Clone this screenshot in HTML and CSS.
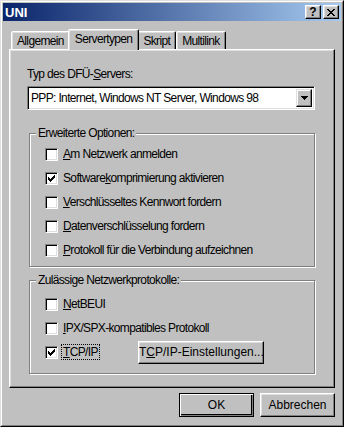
FILE: index.html
```html
<!DOCTYPE html>
<html lang="de">
<head>
    <meta charset="UTF-8">
    <title>UNI</title>
    <link rel="stylesheet" href="styles.css">
</head>
<body>
    <div class="window">
      <div class="frame">
        <!-- Title bar -->
        <div class="titlebar">
            <span class="title">UNI</span>
            <span class="cap-btn help">?</span>
            <span class="cap-btn close">
                <svg width="8" height="7" viewBox="0 0 8 7" shape-rendering="crispEdges">
                    <path d="M0 0h2v1h-2z M6 0h2v1h-2z M1 1h2v1h-2z M5 1h2v1h-2z M2 2h4v1h-4z M3 3h2v1h-2z M2 4h4v1h-4z M1 5h2v1h-2z M5 5h2v1h-2z M0 6h2v1h-2z M6 6h2v1h-2z" fill="#000"/>
                </svg>
            </span>
        </div>

        <div class="dialog">
            <div class="tabs">
                <div class="tab">Allgemein</div>
                <div class="tab active">Servertypen</div>
                <div class="tab">Skript</div>
                <div class="tab">Multilink</div>
            </div>

            <div class="panel">
                <div class="field-label">Typ des DFÜ-<u>S</u>ervers:</div>
                <div class="combo">
                    <span class="combo-text">PPP: Internet, Windows NT Server, Windows 98</span>
                    <span class="combo-btn">
                        <svg width="7" height="4" viewBox="0 0 7 4" shape-rendering="crispEdges">
                            <path d="M0 0h7v1h-7z M1 1h5v1h-5z M2 2h3v1h-3z M3 3h1v1h-1z" fill="#000"/>
                        </svg>
                    </span>
                </div>

                <!-- Erweiterte Optionen -->
                <div class="group">
                    <div class="group-title">Erweiterte Optionen:</div>
                    <div class="group-body">
                        <div class="row"><span class="box"></span><span class="text"><u>A</u>m Netzwerk anmelden</span></div>
                        <div class="row"><span class="box checked"></span><span class="text">Software<u>k</u>omprimierung aktivieren</span></div>
                        <div class="row"><span class="box"></span><span class="text"><u>V</u>erschlüsseltes Kennwort fordern</span></div>
                        <div class="row"><span class="box"></span><span class="text"><u>D</u>atenverschlüsselung fordern</span></div>
                        <div class="row"><span class="box"></span><span class="text"><u>P</u>rotokoll für die Verbindung aufzeichnen</span></div>
                    </div>
                </div>

                <!-- Netzwerkprotokolle -->
                <div class="group group-proto">
                    <div class="group-title">Zulässige Netzwerkprotokolle:</div>
                    <div class="group-body proto-body">
                        <div class="row"><span class="box"></span><span class="text"><u>N</u>etBEUI</span></div>
                        <div class="row"><span class="box"></span><span class="text"><u>I</u>PX/SPX-kompatibles Protokoll</span></div>
                        <div class="row">
                            <span class="check-wide">
                                <span class="box checked"></span><span class="text focus"><u>T</u>CP/IP</span>
                            </span>
                            <button class="btn">T<u>C</u>P/IP-Einstellungen...</button>
                        </div>
                    </div>
                </div>
            </div>

            <div class="buttons">
                <button class="btn btn-default">OK</button>
                <button class="btn">Abbrechen</button>
            </div>
        </div>
      </div>
    </div>
</body>
</html>
```

FILE: styles.css
```css
body {
    margin: 0;
    font-family: "Liberation Sans", Arial, sans-serif;
    font-size: 12px;
    letter-spacing: -0.65px;
    color: #000;
}

u {
    text-decoration: underline;
    text-underline-offset: 1px;
}

.window {
    width: 344px;
    height: 427px;
    box-sizing: border-box;
    background: #c0c0c0;
    border: 1px solid;
    border-color: #dfdfdf #000 #000 #dfdfdf;
}

.frame {
    height: 100%;
    box-sizing: border-box;
    border: 1px solid;
    border-color: #fff #808080 #808080 #fff;
    padding: 1px;
    display: flex;
    flex-direction: column;
}

/* title bar */
.titlebar {
    height: 18px;
    flex: 0 0 18px;
    display: flex;
    align-items: center;
    padding: 0 2px;
    background: linear-gradient(90deg, #0a246a, #a6caf0);
}

.title {
    flex: 1;
    color: #fff;
    font-weight: bold;
    font-size: 13px;
    letter-spacing: 0;
}

.cap-btn {
    width: 16px;
    height: 14px;
    box-sizing: border-box;
    display: flex;
    align-items: center;
    justify-content: center;
    background: #c0c0c0;
    border: 1px solid;
    border-color: #fff #000 #000 #fff;
    box-shadow: inset -1px -1px #808080, inset 1px 1px #dfdfdf;
}

.help {
    margin-right: 2px;
    font-weight: bold;
    font-size: 12px;
    line-height: 12px;
    letter-spacing: 0;
}

/* dialog body */
.dialog {
    flex: 1;
    display: flex;
    flex-direction: column;
    padding: 8px 6px 7px;
}

.tabs {
    display: flex;
    align-items: flex-end;
    height: 20px;
    padding-left: 2px;
}

.tab {
    height: 18px;
    box-sizing: border-box;
    padding: 2px 5px 0;
    line-height: 15px;
    border: 1px solid;
    border-bottom: none;
    border-color: #fff #000 transparent #fff;
    border-radius: 2px 2px 0 0;
    box-shadow: inset -1px 0 #808080, inset 1px 1px #dfdfdf;
    background: #c0c0c0;
}

.tab.active {
    position: relative;
    z-index: 1;
    height: 21px;
    margin: 0 -2px -1px;
    padding: 2px 6px 0;
}

.panel {
    height: 339px;
    box-sizing: border-box;
    padding: 17px 19px 0 17px;
    border: 1px solid;
    border-color: #fff #000 #000 #fff;
    box-shadow: inset -1px -1px #808080, inset 1px 1px #dfdfdf;
}

.field-label {
    line-height: 14px;
}

.combo {
    margin-top: 5px;
    height: 24px;
    box-sizing: border-box;
    display: flex;
    align-items: center;
    background: #fff;
    border: 1px solid;
    border-color: #808080 #fff #fff #808080;
    box-shadow: inset 1px 1px #000, inset -1px -1px #dfdfdf;
    padding: 2px;
}

.combo-text {
    flex: 1;
    padding-left: 1px;
}

.combo-btn {
    width: 16px;
    height: 100%;
    box-sizing: border-box;
    display: flex;
    align-items: center;
    justify-content: center;
    background: #c0c0c0;
    border: 1px solid;
    border-color: #dfdfdf #000 #000 #dfdfdf;
    box-shadow: inset -1px -1px #808080, inset 1px 1px #fff;
}

/* group boxes */
.group {
    margin: 23px 0 0 2px;
    border: 1px solid #808080;
    box-shadow: 1px 1px 0 #fff, inset 1px 1px 0 #fff;
}

.group-proto {
    margin-top: 13px;
}

.group-title {
    width: fit-content;
    margin: -8px 0 0 6px;
    padding: 0 2px;
    line-height: 14px;
    background: #c0c0c0;
}

.group-body {
    padding: 2px 0 4px 15px;
}

.proto-body {
    padding: 5px 0 9px 15px;
}

.row {
    height: 24px;
    display: flex;
    align-items: center;
}

.box {
    width: 13px;
    height: 13px;
    flex: 0 0 13px;
    box-sizing: border-box;
    background: #fff;
    border: 1px solid;
    border-color: #808080 #fff #fff #808080;
    box-shadow: inset 1px 1px #000, inset -1px -1px #dfdfdf;
}

.box.checked {
    background: #fff url("data:image/svg+xml,%3Csvg xmlns='http://www.w3.org/2000/svg' width='7' height='7' shape-rendering='crispEdges'%3E%3Cpath d='M0 2h1v3h-1z M1 3h1v3h-1z M2 4h1v3h-1z M3 3h1v3h-1z M4 2h1v3h-1z M5 1h1v3h-1z M6 0h1v3h-1z'/%3E%3C/svg%3E") no-repeat 2px 2px;
}

.text {
    margin-left: 5px;
    line-height: 14px;
    white-space: nowrap;
}

.check-wide {
    flex: 0 0 93px;
    display: flex;
    align-items: center;
}

.focus {
    outline: 1px dotted #000;
    padding: 0 1px;
    margin-left: 4px;
}

/* push buttons */
.btn {
    font: inherit;
    color: #000;
    height: 24px;
    padding: 0;
    white-space: nowrap;
    background: #c0c0c0;
    border: 1px solid;
    border-color: #fff #000 #000 #fff;
    box-shadow: inset -1px -1px #808080, inset 1px 1px #dfdfdf;
    border-radius: 0;
}

.row .btn {
    width: 126px;
    height: 23px;
}

.buttons {
    margin-top: 5px;
    display: flex;
    justify-content: flex-end;
    gap: 6px;
}

.buttons .btn {
    width: 75px;
}

.btn-default {
    border: 1px solid #000;
    box-shadow: inset 1px 1px #fff, inset -1px -1px #808080, inset -2px -2px #000;
}
```
